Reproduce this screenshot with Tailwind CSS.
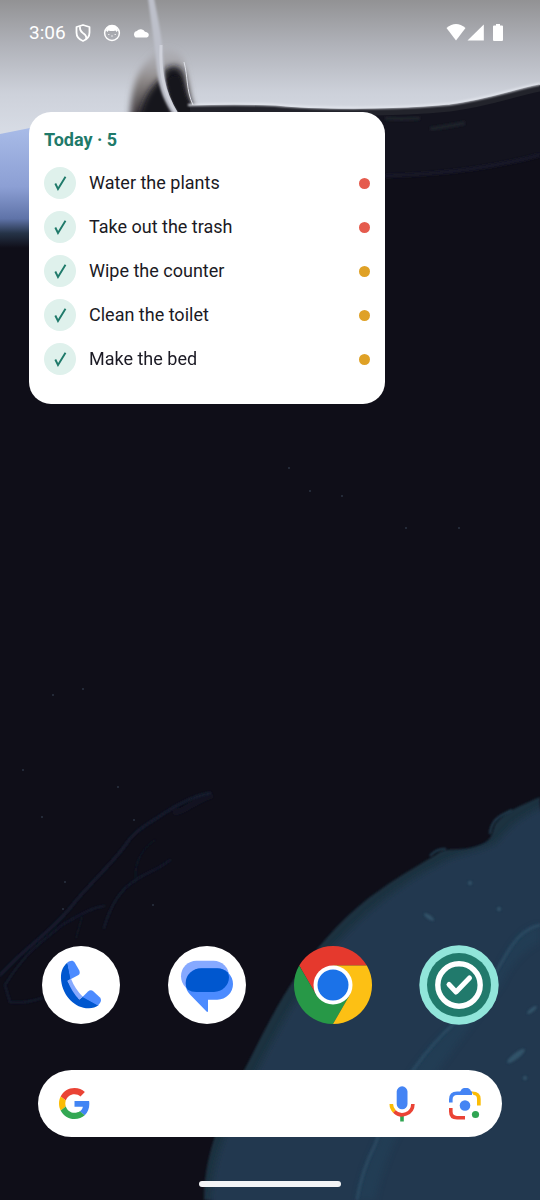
<!DOCTYPE html>
<html lang="en">
<head>
    <meta charset="UTF-8">
    <meta name="viewport" content="width=device-width, initial-scale=1.0">
    <title>Home</title>
    <script src="https://cdn.jsdelivr.net/npm/@tailwindcss/browser@4"></script>
</head>

<body class="bg-[#0f0e18] font-['Roboto',sans-serif]">
    <div class="relative isolate flex min-h-screen flex-col overflow-hidden">

        <!-- wallpaper -->
        <svg class="absolute inset-0 -z-10 h-full w-full" viewBox="0 0 540 1200" preserveAspectRatio="xMidYMid slice" aria-hidden="true">
            <defs>
                <linearGradient id="sky" x1="0" y1="0" x2="0" y2="1">
                    <stop offset="0" stop-color="#929294" />
                    <stop offset=".3" stop-color="#b0b2b9" />
                    <stop offset=".62" stop-color="#cdd1da" />
                    <stop offset="1" stop-color="#dce1ea" />
                </linearGradient>
                <linearGradient id="ice" x1="0" y1="0" x2="0" y2="1">
                    <stop offset="0" stop-color="#a9bce8" />
                    <stop offset=".5" stop-color="#8c9fd4" />
                    <stop offset=".76" stop-color="#5f73a8" />
                    <stop offset=".88" stop-color="#253347" />
                    <stop offset="1" stop-color="#0f0e18" />
                </linearGradient>
                <linearGradient id="haze" x1="0" y1="0" x2="0" y2="1">
                    <stop offset="0" stop-color="#a5a3a8" stop-opacity=".3" />
                    <stop offset=".4" stop-color="#8a8584" />
                    <stop offset=".75" stop-color="#4a4548" />
                    <stop offset="1" stop-color="#14131d" />
                </linearGradient>
                <filter id="soft1"><feGaussianBlur stdDeviation="1" /></filter>
                <filter id="soft3" x="-20%" y="-20%" width="140%" height="140%"><feGaussianBlur stdDeviation="3" /></filter>
            </defs>
            <rect width="540" height="1200" fill="#0f0e18" />
            <rect width="540" height="150" fill="url(#sky)" />
            <path d="M0 134L40 126V248H0Z" fill="url(#ice)" />
            <path d="M40 120H540V300H40Z" fill="#0f0e18" />

            <!-- dark rock and the strand in front of it -->
            <path d="M130 130C130 95 134 72 150 58C160 45 178 46 184 62L189 90L194 130Z" fill="url(#haze)" filter="url(#soft3)" />
            <path d="M137 130C140 106 148 88 162 78L176 130Z" fill="#17161f" filter="url(#soft3)" />
            <path d="M163 72C172 62 182 66 184 76C187 90 187 98 193 107L202 130H174Z" fill="#17161f" filter="url(#soft3)" />
            <path d="M167 80C176 72 181 76 182 84C184 94 186 100 192 108V125H178Z" fill="#14131d" filter="url(#soft1)" />
            <path d="M184 62C188 76 186 90 193 105" fill="none" stroke="#dfe1e8" stroke-width="1" />
            <path d="M148 -2C151 22 155 45 157 70C159 90 165 103 175 118L181 118C169 102 166 90 164 70C163 40 158 20 154 -2Z" fill="#bdc0ca" filter="url(#soft1)" />
            <path d="M161 45C160 68 162 90 177 114" fill="none" stroke="#cfd1da" stroke-width="3" />
            <path d="M190 106C220 105 250 105 275 106C320 111 400 110 450 105C490 100 510 91 540 85V260H190Z" fill="#13131e" />
            <path d="M190 109C220 108 250 108 275 109C320 114 400 113 450 108C490 103 510 94 540 88" fill="none" stroke="#22232b" stroke-width="7" />
            <path d="M188 105C220 104 250 104 275 105C320 109 400 109 450 104C490 98 510 90 540 84" fill="none" stroke="#e6e9f0" stroke-width="2" filter="url(#soft1)" />
            <path d="M385 118Q400 120 420 118M430 129Q450 126 465 123" fill="none" stroke="#1f2029" stroke-width="4" filter="url(#soft1)" />
            <path d="M385 176Q470 174 540 155V300H385Z" fill="#0f0e18" />
            <path d="M385 176Q470 174 540 155" fill="none" stroke="#171828" stroke-width="4" filter="url(#soft1)" />

            <!-- faint veins -->
            <g fill="none" stroke="#141c2e" stroke-linecap="round" filter="url(#soft1)">
                <path d="M210 793C190 797 175 806 160 816C145 826 134 831 124 847C108 868 88 885 70 908C52 930 30 945 15 960L0 975" stroke-width="3" />
                <path d="M210 796C196 800 184 812 176 812" stroke-width="6" opacity=".5" />
                <path d="M170 860C155 872 146 872 136 880C125 886 112 900 104 928M104 906C90 908 80 915 62 925C45 940 28 948 5 985L10 1002Q24 1004 42 998" stroke-width="2" />
                <path d="M136 880C134 865 140 850 155 840M82 917L76 938" stroke-width="1" />
            </g>

            <!-- lower right sphere -->
            <path d="M540 797C520 806 504 812 496 823C491 830 495 838 482 844C465 852 450 847 440 852C425 862 400 875 380 890C350 910 325 938 302 968C275 1005 258 1045 238 1082C218 1122 204 1160 204 1200H540Z" fill="#1e3341" filter="url(#soft1)" />
            <path d="M550 803C515 820 510 827 500 839C490 851 460 852 440 864C400 884 365 913 335 945C300 988 275 1035 250 1085C225 1130 211 1165 210 1210H550Z" fill="#21384f" filter="url(#soft3)" />
            <path d="M430 856Q437 848 446 849M490 834Q491 820 504 814L512 810" fill="none" stroke="#243f52" stroke-width="2" filter="url(#soft1)" />
            <path d="M540 925C515 931 507 955 497 970C480 995 466 1014 445 1032C417 1060 390 1100 375 1145Q362 1170 357 1200H375C382 1165 396 1135 412 1108C440 1065 475 1020 501 985Q514 955 540 942Z" fill="#24425a" opacity=".5" filter="url(#soft3)" />
            <path d="M540 925C515 931 507 955 497 970C480 995 466 1014 445 1032C417 1060 390 1100 375 1145Q362 1170 357 1200" fill="none" stroke="#294860" stroke-width="3" filter="url(#soft1)" />
            <g fill="#325369" filter="url(#soft1)">
                <ellipse cx="429" cy="917" rx="6" ry="2" transform="rotate(35 429 917)" />
                <circle cx="470" cy="883" r="2" />
                <circle cx="499" cy="909" r="2" />
                <ellipse cx="516" cy="1056" rx="11" ry="3" transform="rotate(-38 516 1056)" />
                <ellipse cx="532" cy="1010" rx="6" ry="2" transform="rotate(-38 532 1010)" />
                <circle cx="525" cy="1078" r="2" />
            </g>
            <g fill="#2b3342">
                <circle cx="23" cy="770" r="1" /><circle cx="42" cy="817" r="1" /><circle cx="118" cy="787" r="1" />
                <circle cx="65" cy="882" r="1" /><circle cx="153" cy="905" r="1" /><circle cx="134" cy="820" r="1" />
                <circle cx="53" cy="695" r="1" /><circle cx="83" cy="689" r="1" /><circle cx="342" cy="496" r="1" />
                <circle cx="310" cy="491" r="1" /><circle cx="289" cy="468" r="1" /><circle cx="406" cy="528" r="1" />
                <circle cx="459" cy="528" r="1" /><circle cx="63" cy="909" r="1" />
            </g>
        </svg>

        <!-- status bar -->
        <header class="flex h-[66px] items-center justify-between pl-[29px] pr-9 text-white">
            <div class="flex items-center gap-2">
                <time class="text-[19px] leading-6">3:06</time>
                <svg class="h-5 w-[18px]" viewBox="0 0 18 20" fill="none" stroke="#fff" stroke-width="1.800" stroke-linejoin="round" aria-hidden="true">
                    <path d="M9 2L15.500 4V9.500C15.500 13.500 13 16.500 9 18C5 16.500 2.500 13.500 2.500 9.500V4Z" />
                    <path d="M6 3.500C5.500 8 7.500 9 9.500 10.500C12 12.300 13 13.500 12 16" />
                </svg>
                <svg class="ml-[2px] h-5 w-5" viewBox="0 0 20 20" aria-hidden="true">
                    <circle cx="10" cy="10" r="7.400" fill="none" stroke="#fff" stroke-width="1.500" />
                    <path d="M4 7.500C5 3 8 2.500 10 2.500S15 3 16 7.500L14.500 9L13.500 7.500Q10 8.600 6.500 7.500L5.500 9Z" fill="#fff" />
                    <path d="M6 11.500H7.500M12.500 11.500H14M9 13H11" stroke="#fff" stroke-width=".7" />
                </svg>
                <svg class="ml-[2px] h-5 w-[18px]" viewBox="0 0 18 20" fill="#fff" aria-hidden="true">
                    <path d="M3.600 14.500A3.600 3.600 0 0 1 3.400 8.600Q4.500 8.300 4.800 8A5 5 0 0 1 13 8.700Q13.800 9 14.800 9.200A2.800 2.800 0 0 1 15 14.500Z" />
                </svg>
            </div>
            <svg class="h-5 w-[58px]" viewBox="0 0 58 20" fill="#fff" aria-hidden="true">
                <path d="M10 17.500L0.500 5Q10 -3 19.500 5Z" />
                <path d="M21.500 17.500L37.800 1.500V17.500Z" />
                <path d="M50 1H54V2.600H56Q57 2.600 57 3.600V17Q57 18 56 18H48Q47 18 47 17V3.600Q47 2.600 48 2.600H50Z" />
            </svg>
        </header>

        <!-- tasks widget -->
        <section class="ml-[29px] mt-[46px] w-[356px] max-w-full rounded-[22px] bg-white px-[15px] pb-[29px] pt-4">
            <h1 class="text-lg leading-6 font-bold text-[#1f7a6a]">Today · 5</h1>
            <ul class="mt-[15px] flex flex-col gap-3 text-lg text-[#1b1a24]">
                <li class="flex items-center">
                    <span class="grid">
                        <input type="checkbox" id="task1" class="col-start-1 row-start-1 h-8 w-8 appearance-none rounded-full bg-[#dff1ec]" checked />
                        <svg class="pointer-events-none col-start-1 row-start-1 h-8 w-8" viewBox="0 0 32 32" aria-hidden="true"><path d="M11.300 16.500L14 22L21.500 9.800" fill="none" stroke="#1f7a6a" stroke-width="1.900" /></svg>
                    </span>
                    <label for="task1" class="ml-[13px] grow">Water the plants</label>
                    <span class="h-[11px] w-[11px] rounded-full bg-[#e55b4d]"></span>
                </li>
                <li class="flex items-center">
                    <span class="grid">
                        <input type="checkbox" id="task2" class="col-start-1 row-start-1 h-8 w-8 appearance-none rounded-full bg-[#dff1ec]" checked />
                        <svg class="pointer-events-none col-start-1 row-start-1 h-8 w-8" viewBox="0 0 32 32" aria-hidden="true"><path d="M11.300 16.500L14 22L21.500 9.800" fill="none" stroke="#1f7a6a" stroke-width="1.900" /></svg>
                    </span>
                    <label for="task2" class="ml-[13px] grow">Take out the trash</label>
                    <span class="h-[11px] w-[11px] rounded-full bg-[#e55b4d]"></span>
                </li>
                <li class="flex items-center">
                    <span class="grid">
                        <input type="checkbox" id="task3" class="col-start-1 row-start-1 h-8 w-8 appearance-none rounded-full bg-[#dff1ec]" checked />
                        <svg class="pointer-events-none col-start-1 row-start-1 h-8 w-8" viewBox="0 0 32 32" aria-hidden="true"><path d="M11.300 16.500L14 22L21.500 9.800" fill="none" stroke="#1f7a6a" stroke-width="1.900" /></svg>
                    </span>
                    <label for="task3" class="ml-[13px] grow">Wipe the counter</label>
                    <span class="h-[11px] w-[11px] rounded-full bg-[#dfa126]"></span>
                </li>
                <li class="flex items-center">
                    <span class="grid">
                        <input type="checkbox" id="task4" class="col-start-1 row-start-1 h-8 w-8 appearance-none rounded-full bg-[#dff1ec]" checked />
                        <svg class="pointer-events-none col-start-1 row-start-1 h-8 w-8" viewBox="0 0 32 32" aria-hidden="true"><path d="M11.300 16.500L14 22L21.500 9.800" fill="none" stroke="#1f7a6a" stroke-width="1.900" /></svg>
                    </span>
                    <label for="task4" class="ml-[13px] grow">Clean the toilet</label>
                    <span class="h-[11px] w-[11px] rounded-full bg-[#dfa126]"></span>
                </li>
                <li class="flex items-center">
                    <span class="grid">
                        <input type="checkbox" id="task5" class="col-start-1 row-start-1 h-8 w-8 appearance-none rounded-full bg-[#dff1ec]" checked />
                        <svg class="pointer-events-none col-start-1 row-start-1 h-8 w-8" viewBox="0 0 32 32" aria-hidden="true"><path d="M11.300 16.500L14 22L21.500 9.800" fill="none" stroke="#1f7a6a" stroke-width="1.900" /></svg>
                    </span>
                    <label for="task5" class="ml-[13px] grow">Make the bed</label>
                    <span class="h-[11px] w-[11px] rounded-full bg-[#dfa126]"></span>
                </li>
            </ul>
        </section>

        <!-- dock -->
        <nav class="mt-auto flex items-center justify-between px-[41px]">
            <a href="#phone" aria-label="Phone">
                <svg class="h-20 w-20" viewBox="-1 -1 80 80" aria-hidden="true">
                    <circle cx="39" cy="39" r="39" fill="#fff" />
                    <path d="M25.500 16.500C20 21 18.300 27 19.200 35C21 50 33 62.500 47 62.300C50.500 62.200 54 61.300 56.500 59.300L41 50.500L37.300 53.500L25.500 35L29 33Z" fill="#0057cf" />
                    <path d="M25.300 16.700C28 14.500 31 14 32.700 16.500L37.300 24.500Q38.500 27.500 36.500 29L28.500 33.300Z" fill="#4c8bff" />
                    <path d="M40.500 51L46 45.500Q48.700 43 51.500 45.500L58 51.500Q60 54 58 57L56 59.600Z" fill="#4c8bff" />
                    <path d="M29 32.700L25.500 34.700Q30 46.500 37.300 53.500L40.800 50.700Q33 43 29 32.700Z" fill="#86a9ff" />
                </svg>
            </a>
            <a href="#messages" aria-label="Messages">
                <svg class="h-20 w-20" viewBox="-1 -1 80 80" aria-hidden="true">
                    <circle cx="39" cy="39" r="39" fill="#fff" />
                    <rect x="13" y="14.700" width="48" height="31" rx="15.500" fill="#86a9ff" />
                    <path d="M33.400 22.300H49.300A15.700 15.700 0 0 1 49.300 53.700H40V65Q40 66.500 38.500 65.500L22 48.500Q17.700 44 17.700 38A15.700 15.700 0 0 1 33.400 22.300Z" fill="#4c8bff" />
                    <path d="M33.400 22.300H49.300Q55 22.300 59.500 26.200Q61 29 61 31A15 15 0 0 1 46 46H28.500Q23.500 46 19.500 43.500Q17.700 41 17.700 37A15.700 14.700 0 0 1 33.400 22.300Z" fill="#0057cf" />
                </svg>
            </a>
            <a href="#chrome" aria-label="Chrome">
                <svg class="h-20 w-20" viewBox="-40 -40 80 80" aria-hidden="true">
                    <path d="M-33.800 -19.500A39 39 0 0 1 33.800 -19.500L0 -19.500L-16.900 9.750Z" fill="#e5392d" />
                    <path d="M-33.800 -19.500A39 39 0 0 0 0 39L16.900 9.750H-16.900Z" fill="#279847" />
                    <path d="M0 39A39 39 0 0 0 33.800 -19.500H0L16.900 9.750Z" fill="#fdc014" />
                    <circle r="19.500" fill="#fff" />
                    <circle r="15.500" fill="#1b72e8" />
                </svg>
            </a>
            <a href="#tasks" aria-label="Tasks">
                <svg class="h-20 w-20" viewBox="-40 -40 80 80" aria-hidden="true">
                    <circle r="39.700" fill="#91e5da" />
                    <circle r="32" fill="#217a6c" />
                    <circle r="21.200" fill="none" stroke="#fff" stroke-width="5.400" />
                    <path d="M-10 -.5L-3 7L10.500 -7" fill="none" stroke="#fff" stroke-width="5" stroke-linecap="round" stroke-linejoin="round" />
                </svg>
            </a>
        </nav>

        <!-- search -->
        <form class="mx-[38px] mt-[45px] flex h-[67px] items-center rounded-full bg-white pl-[21px] pr-5" role="search">
            <svg class="h-[31px] w-[31px] shrink-0" viewBox="0 0 48 48" aria-hidden="true">
                <path fill="#EA4335" d="M24 9.500c3.540 0 6.710 1.220 9.210 3.600l6.850-6.850C35.900 2.380 30.470 0 24 0 14.620 0 6.510 5.380 2.560 13.220l7.980 6.190C12.430 13.720 17.740 9.500 24 9.500z" />
                <path fill="#4285F4" d="M46.980 24.550c0-1.570-.15-3.090-.38-4.550H24v9.020h12.940c-.58 2.960-2.260 5.480-4.780 7.180l7.730 6c4.510-4.180 7.090-10.360 7.090-17.650z" />
                <path fill="#FBBC05" d="M10.530 28.590c-.48-1.450-.76-2.990-.76-4.590s.27-3.140.76-4.590l-7.980-6.190C.92 16.460 0 20.120 0 24c0 3.880.92 7.540 2.560 10.780l7.970-6.190z" />
                <path fill="#34A853" d="M24 48c6.480 0 11.930-2.130 15.890-5.810l-7.730-6c-2.150 1.450-4.920 2.300-8.160 2.300-6.260 0-11.570-4.220-13.470-9.910l-7.980 6.190C6.510 42.620 14.620 48 24 48z" />
            </svg>
            <input type="search" aria-label="Search" class="h-full min-w-0 grow px-4 text-lg outline-none" />
            <button type="button" aria-label="Voice search">
                <svg class="h-9 w-[26px]" viewBox="0 0 26 36" fill="none" aria-hidden="true">
                    <rect x="7.700" y="0.300" width="10.800" height="23" rx="5.400" fill="#4484f4" />
                    <path d="M13 29V35.500" stroke="#30a552" stroke-width="3.600" />
                    <path d="M2.300 18A10.800 10.800 0 0 0 5.500 25.600" stroke="#fbbc05" stroke-width="3.600" />
                    <path d="M5.400 25.500A10.800 10.800 0 0 0 23.900 18" stroke="#ea4335" stroke-width="3.600" />
                </svg>
            </button>
            <button type="button" aria-label="Search with camera" class="ml-[33px]">
                <svg class="h-[34px] w-[34px]" viewBox="0 0 34 34" fill="none" stroke-width="3.600" aria-hidden="true">
                    <path d="M2.800 15.500V12.500Q2.800 6.200 9 6.200H24" stroke="#4484f4" />
                    <path d="M11 6.500L13.500 2.500Q14.500 1 16 1H19.500Q21 1 22 2.500L24.500 6.500Z" fill="#4484f4" />
                    <path d="M23.500 4.400Q32.700 4 32.700 12V18.500H29V12Q29 8 25.500 8Z" fill="#fbbc05" />
                    <path d="M2.800 21V24.500Q2.800 30.700 9 30.700H17" stroke="#ea4335" />
                    <circle cx="17" cy="18.500" r="5.300" fill="#4484f4" />
                    <circle cx="27.500" cy="27.500" r="3.600" fill="#30a552" />
                </svg>
            </button>
        </form>

        <div class="mx-auto mb-[13px] mt-11 h-[6px] w-[142px] rounded-full bg-[#f3f4f6]"></div>
    </div>
</body>
</html>
